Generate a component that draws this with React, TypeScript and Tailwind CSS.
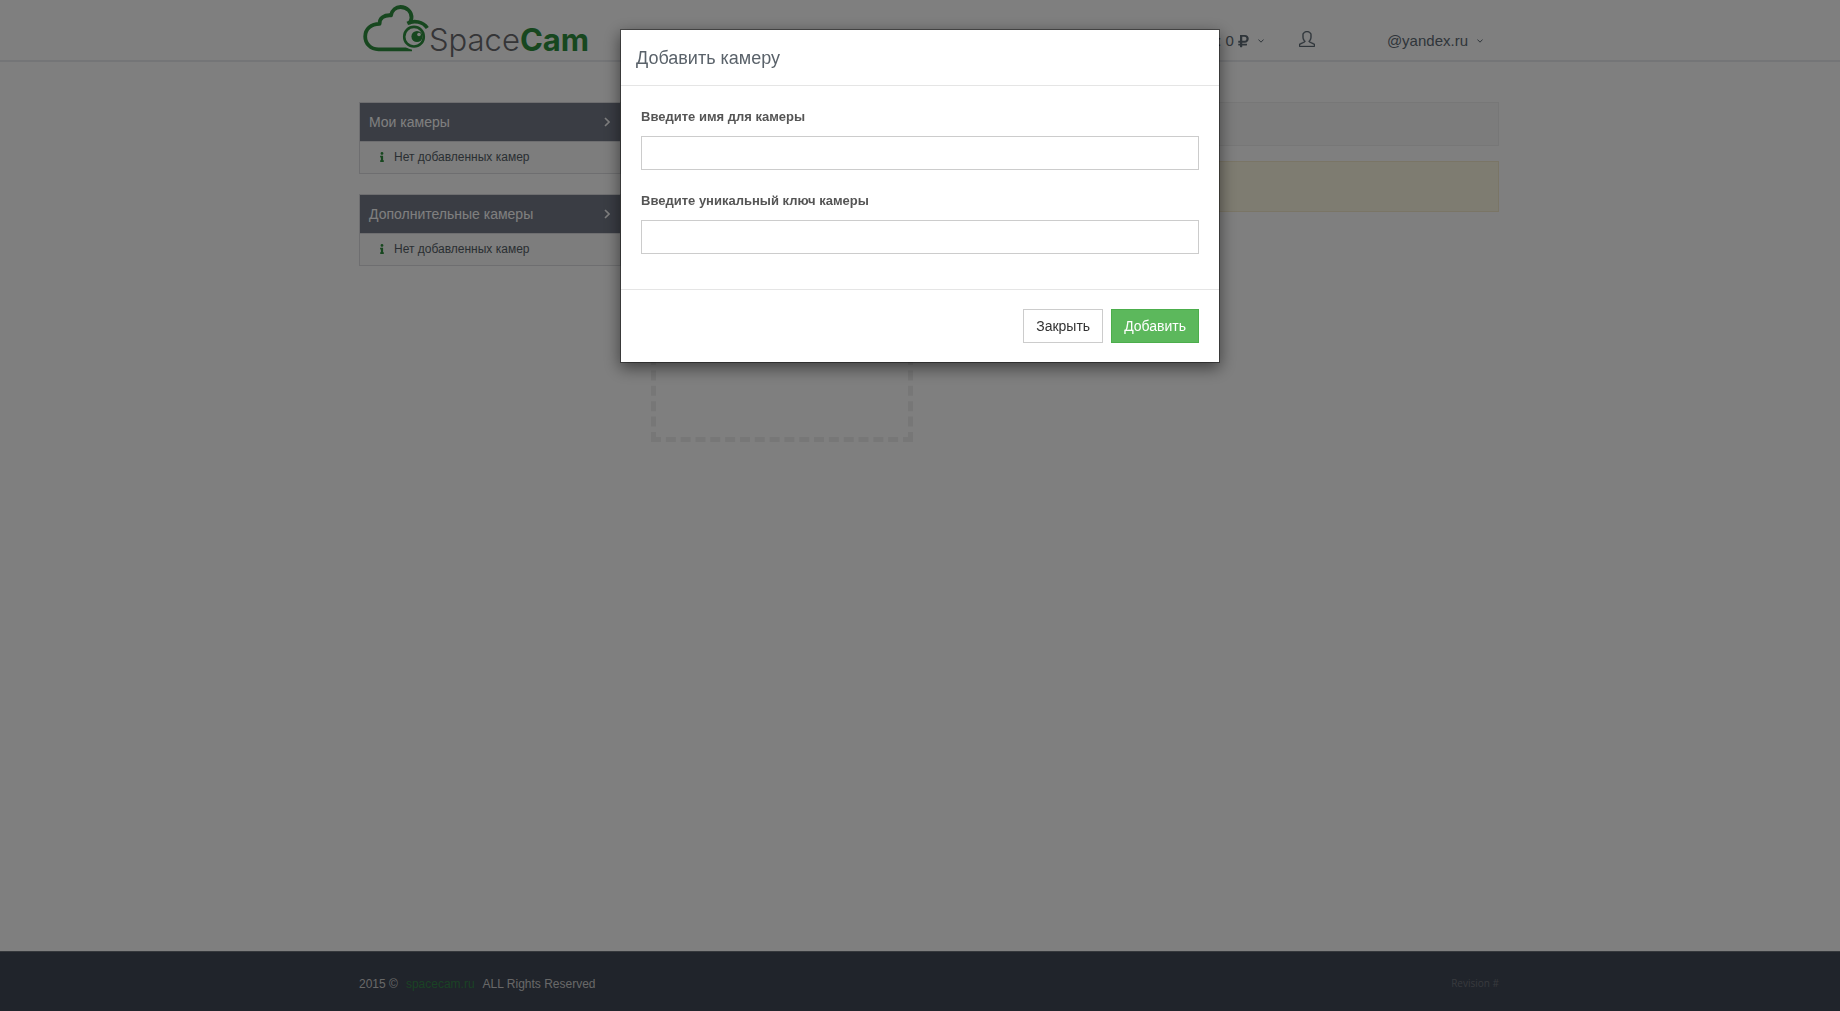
import { useState } from "react";
import type { FormEvent } from "react";
import { FaInfo, FaRubleSign } from "react-icons/fa";
import { SlUser } from "react-icons/sl";

const CAMERA_GROUPS = [
  { id: "own", title: "Мои камеры", empty: "Нет добавленных камер" },
  { id: "extra", title: "Дополнительные камеры", empty: "Нет добавленных камер" },
];

function ChevronDown() {
  return (
    <svg viewBox="0 0 6 4" className="ml-[9px] h-1 w-1.5" fill="none" stroke="currentColor" aria-hidden="true">
      <path d="M0.400 0.500L3 3.200L5.600 0.500" />
    </svg>
  );
}

function Logo() {
  return (
    <a href="#" className="flex h-[60px] items-center pl-1">
      <svg viewBox="0 0 66 50" className="h-[50px] w-[66px] shrink-0" fill="none" aria-hidden="true">
        <path
          d="M49 44.300H15.500C7.500 44.300 2.200 38.500 2.200 31.500C2.200 24 8 18.800 16.600 18.800C16.300 13 21 9.800 28 10.300C29 5 33 2 37.500 2C44 2 49 7 48.500 13C48.300 15 47.500 17 46 19"
          stroke="#2f8f3f"
          strokeWidth="3.800"
          strokeLinejoin="round"
        />
        <circle cx="51" cy="31.700" r="13" fill="#fff" />
        <path d="M44.300 18.300C51 15 60 16.500 64.300 23" stroke="#2f8f3f" strokeWidth="3.600" />
        <circle cx="51" cy="31.700" r="9.800" stroke="#2f8f3f" strokeWidth="2.600" />
        <circle cx="54" cy="31.500" r="5.600" fill="#2f8f3f" />
        <circle cx="56" cy="29.500" r="1.800" fill="#fff" />
      </svg>
      <span className="mt-5 font-['Inter'] text-[31px] leading-10 font-light text-[#6a6a6e]">
        Space<span className="font-bold text-[#2f8f3f]">Cam</span>
      </span>
    </a>
  );
}

function Header() {
  return (
    <header className="border-b-2 border-[#e9ebef] pl-[18px]">
      <div className="mx-auto flex max-w-[1140px] items-start justify-between">
        <Logo />
        <nav className="flex items-center pt-[23px] pr-4 text-[15px] leading-5 text-[#5f6b75]">
          <button type="button" className="flex h-9 items-center">
            Баланс: 0
            <FaRubleSign className="ml-1 h-3.5 w-[11px]" />
            <ChevronDown />
          </button>
          <a href="#" aria-label="Профиль" className="ml-[35px] flex h-9 items-center pb-1">
            <SlUser className="h-4 w-4 stroke-current stroke-[24]" />
          </a>
          <button type="button" className="ml-[72px] flex h-9 items-center">
            @yandex.ru
            <ChevronDown />
          </button>
        </nav>
      </div>
    </header>
  );
}

function Sidebar() {
  return (
    <aside className="flex w-[262px] shrink-0 flex-col gap-5">
      {CAMERA_GROUPS.map((group) => (
        <section key={group.id} className="border border-[#dcdde0]">
          <h2 className="flex h-[38px] items-center justify-between bg-[#747a88] pr-2.5 pl-[9px] text-sm text-white">
            {group.title}
            <svg viewBox="0 0 6 10" className="h-2.5 w-1.5" fill="none" stroke="currentColor" strokeWidth="1.600" aria-hidden="true">
              <path d="M1 1L5 5L1 9" />
            </svg>
          </h2>
          <p className="flex h-8 items-center gap-1.5 border-t border-[#dcdde0] bg-[#fafafa] pb-0.5 pl-4 text-xs text-[#555e66]">
            <FaInfo className="h-2.5 w-3 text-[#2f8f3f]" />
            {group.empty}
          </p>
        </section>
      ))}
    </aside>
  );
}

function AddCameraDialog({ onClose }: { onClose: () => void }) {
  const [name, setName] = useState("");
  const [cameraKey, setCameraKey] = useState("");

  function submit(e: FormEvent) {
    e.preventDefault();
    if (name.trim() && cameraKey.trim()) {
      onClose();
    }
  }

  return (
    <div className="fixed inset-0 z-10 overflow-y-auto bg-black/50">
      <form
        role="dialog"
        aria-labelledby="add-camera-title"
        onSubmit={submit}
        className="mx-auto mt-[29px] max-w-[600px] border border-black/40 bg-white bg-clip-padding shadow-[0_5px_15px_rgba(0,0,0,0.5)]"
      >
        <h1 id="add-camera-title" className="border-b border-[#e5e5e5] px-[15px] pt-4 pb-[15px] text-lg leading-6 text-[#5a626a]">
          Добавить камеру
        </h1>
        <div className="flex flex-col gap-[21px] px-5 pt-[21px] pb-[35px]">
          <div>
            <label htmlFor="camera-name" className="mb-[9px] block text-[13px] leading-5 font-bold text-[#555]">
              Введите имя для камеры
            </label>
            <input
              id="camera-name"
              value={name}
              onChange={(e) => setName(e.target.value)}
              className="block h-[34px] w-full border border-[#ccc] px-3 text-sm outline-none focus:border-[#999]"
            />
          </div>
          <div>
            <label htmlFor="camera-key" className="mb-[9px] block text-[13px] leading-5 font-bold text-[#555]">
              Введите уникальный ключ камеры
            </label>
            <input
              id="camera-key"
              value={cameraKey}
              onChange={(e) => setCameraKey(e.target.value)}
              className="block h-[34px] w-full border border-[#ccc] px-3 text-sm outline-none focus:border-[#999]"
            />
          </div>
        </div>
        <div className="flex justify-end gap-2 border-t border-[#e5e5e5] px-5 py-[19px] text-sm">
          <button type="button" onClick={onClose} className="h-[34px] border border-[#ccc] bg-white px-3 text-[#333]">
            Закрыть
          </button>
          <button type="submit" className="h-[34px] border border-[#4cae4c] bg-[#5cb85c] px-3 text-white">
            Добавить
          </button>
        </div>
      </form>
    </div>
  );
}

export default function App() {
  const [dialogOpen, setDialogOpen] = useState(true);

  return (
    <div className="flex min-h-screen flex-col bg-white font-['Liberation_Sans',Arial,sans-serif]">
      <Header />
      <main className="pt-10 pl-[18px]">
        <div className="mx-auto flex max-w-[1140px] gap-[30px]">
          <Sidebar />
          <div className="grow">
            <div className="h-11 border border-[#eee] bg-[#f9f9f9]" />
            <div className="mt-[15px] h-[51px] border border-[#f5ebcc] bg-[#fcf8e3]" />
            <button
              type="button"
              aria-label="Добавить камеру"
              onClick={() => setDialogOpen(true)}
              className="mt-5 block h-[210px] w-[262px] border-5 border-dashed border-[#eee]"
            />
          </div>
        </div>
      </main>
      <footer className="mt-auto border-t border-[#6b7078] bg-[#404856] pl-[18px]">
        <div className="mx-auto flex h-[59px] max-w-[1140px] items-center justify-between pt-2 pb-1 text-xs text-[#d0d0d0]">
          <p className="flex gap-2">
            <span>2015 ©</span>
            <a href="#" className="text-[#35854a]">
              spacecam.ru
            </a>
            <span>ALL Rights Reserved</span>
          </p>
          <p className="font-['Open_Sans'] text-[10px] text-[#70747c]">Revision #</p>
        </div>
      </footer>
      {dialogOpen && <AddCameraDialog onClose={() => setDialogOpen(false)} />}
    </div>
  );
}
